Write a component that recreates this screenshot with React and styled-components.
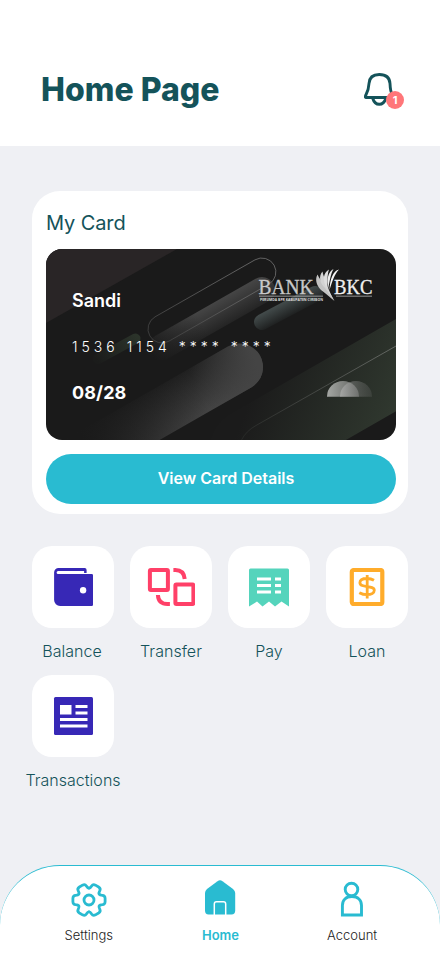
import React from "react";
import styled, { createGlobalStyle } from "styled-components";

const GlobalStyle = createGlobalStyle`
  * { box-sizing: border-box; }
  body { margin: 0; font-family: Inter, "Liberation Sans", sans-serif; background: #eff0f4; }
  svg { display: block; flex: none; }
`;

const Screen = styled.div`
  width: 440px;
  height: 956px;
  display: flex;
  flex-direction: column;
  overflow: hidden;
  background: #eff0f4;
`;

const Header = styled.header`
  height: 146px;
  padding: 34px 35px 0 41px;
  display: flex;
  align-items: center;
  justify-content: space-between;
  background: #fff;
`;

const Title = styled.h1`
  margin: 0;
  font-size: 32px;
  line-height: 40px;
  font-weight: 800;
  color: #14535a;
`;

const BellButton = styled.div`
  position: relative;
  width: 41px;
  height: 38px;
`;

const Badge = styled.span`
  position: absolute;
  left: 22px;
  top: 20px;
  width: 18px;
  height: 18px;
  border-radius: 50%;
  background: #ff7679;
  color: #fff;
  font-size: 11px;
  font-weight: 700;
  line-height: 18px;
  text-align: center;
`;

const Main = styled.main`
  flex: 1;
  padding: 45px 32px 0;
  display: flex;
  flex-direction: column;
  gap: 32px;
`;

const Panel = styled.section`
  height: 323px;
  padding: 19px 12px 10px 14px;
  border-radius: 28px;
  background: #fff;
`;

const PanelTitle = styled.h2`
  margin: 0 0 13px;
  font-size: 20px;
  line-height: 26px;
  font-weight: 400;
  letter-spacing: -0.1px;
  color: #14535a;
`;

const BankCard = styled.div`
  position: relative;
  isolation: isolate;
  width: 350px;
  height: 191px;
  padding: 40px 26px 0;
  display: flex;
  flex-direction: column;
  gap: 22px;
  border-radius: 16px;
  overflow: hidden;
  background: #1a1a1a;
  color: #fff;

  & > svg { position: absolute; inset: 0; z-index: -1; }
`;

const CardText = styled.div`
  height: 24px;
  line-height: 24px;
  white-space: pre;
  font-size: ${(p) => p.$size}px;
  font-weight: ${(p) => p.$weight};
  letter-spacing: ${(p) => p.$tracking || 0}px;
`;

const PrimaryButton = styled.button`
  width: 350px;
  height: 50px;
  margin-top: 14px;
  padding: 0 0 2px 10px;
  border: 0;
  border-radius: 25px;
  background: #29bbd1;
  color: #fff;
  font: 600 16px/48px Inter, sans-serif;
  text-align: center;
`;

const Grid = styled.div`
  display: grid;
  grid-template-columns: repeat(4, 82px);
  justify-content: space-between;
  row-gap: 14px;
`;

const Shortcut = styled.div`
  height: 115px;
  display: flex;
  flex-direction: column;
  align-items: center;
`;

const Tile = styled.div`
  width: 82px;
  height: 82px;
  flex: none;
  display: grid;
  place-items: center;
  border-radius: 20px;
  background: #fff;
`;

const Label = styled.span`
  margin-top: 12px;
  padding-right: ${(p) => p.$nudge || 0}px;
  font-size: 16px;
  line-height: 22px;
  font-weight: 300;
  letter-spacing: 0.03px;
  white-space: nowrap;
  color: #14535a;
`;

const NavBar = styled.nav`
  height: 91px;
  padding: 11px 22px 0 23px;
  display: grid;
  grid-template-columns: repeat(3, 1fr);
  border-top: 1px solid #29bbd1;
  border-radius: 60px 60px 0 0;
  background: #fff;
`;

const NavItem = styled.div`
  display: flex;
  flex-direction: column;
  align-items: center;
  gap: 5px;
  font-size: 13px;
  line-height: 20px;
  font-weight: ${(p) => (p.$active ? 600 : 300)};
  color: ${(p) => (p.$active ? "#29bbd1" : "#222")};
`;

const CardArt = () => (
  <svg width="350" height="191" viewBox="46 249 350 191">
    <defs>
      <linearGradient id="upper" gradientUnits="userSpaceOnUse" x1="215" y1="302" x2="230" y2="329">
        <stop offset="0" stopColor="#454545" />
        <stop offset="1" stopColor="#1e1e1e" />
      </linearGradient>
      <linearGradient id="fadeGray" gradientUnits="userSpaceOnUse" x1="148" y1="350" x2="200" y2="320">
        <stop offset="0" stopColor="#1a1a1a" />
        <stop offset="1" stopColor="#1a1a1a" stopOpacity="0" />
      </linearGradient>
      <linearGradient id="teal" gradientUnits="userSpaceOnUse" x1="285" y1="302" x2="293" y2="317">
        <stop offset="0" stopColor="#414949" />
        <stop offset="1" stopColor="#1a1b1b" />
      </linearGradient>
      <linearGradient id="leaf" gradientUnits="userSpaceOnUse" x1="136" y1="336" x2="98" y2="362">
        <stop offset="0" stopColor="#2b332a" />
        <stop offset="1" stopColor="#1b1c1b" />
      </linearGradient>
      <linearGradient id="lower" gradientUnits="userSpaceOnUse" x1="166" y1="376" x2="203" y2="440">
        <stop offset="0" stopColor="#1c1c1c" />
        <stop offset="0.75" stopColor="#464646" />
      </linearGradient>
      <linearGradient id="lowerFade" gradientUnits="userSpaceOnUse" x1="80" y1="435" x2="190" y2="375">
        <stop offset="0" stopColor="#1a1a1a" />
        <stop offset="1" stopColor="#1a1a1a" stopOpacity="0" />
      </linearGradient>
      <linearGradient id="lowerCap" gradientUnits="userSpaceOnUse" x1="195" y1="385" x2="255" y2="360">
        <stop offset="0" stopColor="#444" stopOpacity="0" />
        <stop offset="1" stopColor="#444" />
      </linearGradient>
      <linearGradient id="green" gradientUnits="userSpaceOnUse" x1="385" y1="425" x2="260" y2="375">
        <stop offset="0" stopColor="#2f372e" />
        <stop offset="1" stopColor="#1b1b1b" />
      </linearGradient>
      <linearGradient id="outline" gradientUnits="userSpaceOnUse" x1="276" y1="260" x2="150" y2="340">
        <stop offset="0" stopColor="#747474" />
        <stop offset="1" stopColor="#303030" />
      </linearGradient>
      <linearGradient id="ray" gradientUnits="userSpaceOnUse" x1="396" y1="347" x2="242" y2="440">
        <stop offset="0" stopColor="#7d807c" />
        <stop offset="1" stopColor="#2b2d2b" />
      </linearGradient>
      <linearGradient id="halfA" x1="0" y1="0" x2="1" y2="0">
        <stop offset="0" stopColor="#a5a7a4" />
        <stop offset="1" stopColor="#5b5e5a" />
      </linearGradient>
      <linearGradient id="halfB" x1="0" y1="0" x2="1" y2="0">
        <stop offset="0" stopColor="#c8c8c8" stopOpacity="0.45" />
        <stop offset="1" stopColor="#777" stopOpacity="0.22" />
      </linearGradient>
    </defs>
    <path d="M46 249H177L46 323Z" fill="#292526" />
    <path d="M239.500 367 60 470" stroke="url(#lower)" strokeWidth="47" strokeLinecap="round" />
    <path d="M239.500 367 60 470" stroke="url(#lowerFade)" strokeWidth="48" strokeLinecap="round" />
    <path d="M239.500 367 60 470" stroke="url(#lowerCap)" strokeWidth="47" strokeLinecap="round" />
    <path d="M250 449 450 334" stroke="url(#green)" strokeWidth="80" strokeLinecap="round" />
    <path d="M396 346 256 425.500Q246 431 241.500 440" fill="none" stroke="url(#ray)" strokeWidth="0.7" />
    <path d="M262 290 162 347" stroke="url(#upper)" strokeWidth="26" strokeLinecap="round" />
    <path d="M262 290 162 347" stroke="url(#fadeGray)" strokeWidth="27" strokeLinecap="round" />
    <path d="M262 322 315 294" stroke="url(#teal)" strokeWidth="16" strokeLinecap="round" />
    <path d="M98 359 135.500 338.500" stroke="url(#leaf)" strokeWidth="10" strokeLinecap="round" />
    <rect x="-14" y="-14" width="143" height="28" rx="14" transform="translate(162 329) rotate(-29.700)" fill="none" stroke="url(#outline)" strokeWidth="0.7" />

    <g fontFamily="Liberation Serif, serif" strokeWidth="0.300">
      <text x="258.500" y="293.500" fontSize="20.500" textLength="55" lengthAdjust="spacingAndGlyphs" fill="#c8c8c8" stroke="#c8c8c8">BANK</text>
      <text x="334" y="293.500" fontSize="20.500" textLength="38.500" lengthAdjust="spacingAndGlyphs" fill="#efefef" stroke="#efefef">BKC</text>
    </g>
    <path d="M259 295.700H323V296.600H259ZM336 295.700H372V296.600H336Z" fill="#bcbcbc" />
    <text x="260" y="300.500" fontSize="3.800" fontWeight="700" textLength="63" lengthAdjust="spacingAndGlyphs" fontFamily="Open Sans, sans-serif" fill="#ddd">PERUMDA BPR KABUPATEN CIREBON</text>
    <path d="M317.500 274.500C315 279 316 285 321 290C326 294 330 297 334.500 301C332 296 328 290 325 286C322 282 319 278 317.500 274.500Z" fill="#c3c3c3" />
    <path d="M322.500 271.500C318.500 276 319.500 283 325 288L333 299C330 292 328 288 326 282C324.500 278 323 275 322.500 271.500Z" fill="#d3d3d3" />
    <path d="M329 269.500C323 273 322.500 280 326.500 288C328 280 327 275 329 269.500Z" fill="#dedede" />
    <path d="M333.500 269C328 272 326.500 279 328 289C330 280 330.500 274 333.500 269Z" fill="#eee" />
    <path d="M339 269.500C333 271 330 279 329.500 290C332.500 281 334 275 339 269.500Z" fill="#f4f4f4" />
    <path d="M327 396.700a16 15.700 0 0 1 32 0Z" fill="url(#halfA)" />
    <path d="M340 396.700a16 15.700 0 0 1 32 0Z" fill="url(#halfB)" />
  </svg>
);

const BellIcon = () => (
  <svg width="41" height="38" viewBox="364 71 41 38" fill="none" stroke="#14535a" strokeWidth="2.900" strokeLinecap="round" strokeLinejoin="round">
    <path d="M366 97.500H391.500C393 97.500 393.300 95.800 392.300 94.500C390.400 92 390.200 88 390 83.500C389.600 77.500 385.500 74.500 379.300 74.500S369.400 77.500 369 83.500C368.700 88 368 91 366.200 94.300C365.300 96 365 97.500 366 97.500Z" />
    <path d="M372.800 98.500C374 102.500 376.400 104.300 379.300 104.300S384.500 102.500 385.800 98.500" />
  </svg>
);

const WalletIcon = () => (
  <svg width="40" height="38" viewBox="-.6 0 40 38">
    <path d="M5 0H31a2 2 0 0 1 2 2V5H30.500V3H4.500a1.500 1.500 0 0 0 0 3H38a1.500 1.500 0 0 1 1.500 1.500V36.500A1.500 1.500 0 0 1 38 38H6.500A6 6 0 0 1 .5 32V4.500A4.500 4.500 0 0 1 5 0Z" fill="#3728b6" />
    <circle cx="29.500" cy="22.300" r="3.200" fill="#fff" />
  </svg>
);

const TransferIcon = () => (
  <svg width="48" height="38" viewBox="-.4 0 48 38" fill="none" stroke="#ff4068" strokeWidth="4" strokeLinejoin="round">
    <rect x="2.500" y="2" width="18" height="20" rx="1" />
    <rect x="28" y="16.500" width="18" height="19.500" rx="1" />
    <path d="M26 2H28Q36.500 2 37.300 11M10.500 27Q11 36 20 36H22.500" />
  </svg>
);

const ReceiptIcon = () => (
  <svg width="40" height="39" viewBox="0 0 40 39">
    <path d="M1.500 .5H38.500A1.500 1.500 0 0 1 40 2V38.500L32.500 33.500 26 38.500 20 33.500 13.500 38.500 8 33.500 0 38.500V2A1.500 1.500 0 0 1 1.500 .5Z" fill="#55d4bc" />
    <path d="M8 9.500H22V12.500H8ZM26 9.500H32V12.500H26ZM8 16H22V19H8ZM26 16H32V19H26ZM8 22.500H22V25.500H8ZM26 22.500H32V25.500H26Z" fill="#fff" />
  </svg>
);

const LoanIcon = () => (
  <svg width="36" height="38" viewBox="0 0 36 38" fill="none" stroke="#ffac2b">
    <rect x="2.800" y="2" width="30.500" height="34" rx="2" strokeWidth="4.200" />
    <path d="M25 12.300Q22 10.500 18 10.500C13.700 10.500 10.900 12.200 10.900 14.700C10.900 20.400 25.300 16.800 25.300 22.300C25.300 25 22.300 26.700 18 26.700Q14 26.700 10.300 24.700M18.200 7V30.500" strokeWidth="2.800" />
  </svg>
);

const NewsIcon = () => (
  <svg width="40" height="38" viewBox="-.5 0 40 38">
    <rect x=".5" width="39" height="38" rx="1.500" fill="#3728b6" />
    <path d="M6.500 8H18V17.500H6.500ZM22 8H34V11H22ZM22 14.500H34V17.500H22ZM6.500 21H34V24H6.500ZM6.500 27.500H34V30.500H6.500Z" fill="#fff" />
  </svg>
);

const toothAngles = [0, 60, 120, 180, 240, 300];

const GearIcon = () => (
  <svg width="36" height="43" viewBox="-18 -23 36 43" fill="none" stroke="#29bbd1" strokeWidth="2.800" strokeLinejoin="round" strokeLinecap="round">
    {toothAngles.map((angle) => (
      <path key={angle} transform={`rotate(${angle})`} d="M10.200 -5.890C10.700 -5 11.800 -4.700 13.400 -4.700Q16 -4.600 16.100 -1.800V1.800Q16 4.600 13.400 4.700C11.800 4.700 10.700 5 10.200 5.890" />
    ))}
    <circle r="5" />
  </svg>
);

const HomeIcon = () => (
  <svg width="32" height="43" viewBox="204.500 877 32 43">
    <path d="M218 881.200Q220.500 879.500 223 881.200L233.500 889Q235.700 890.800 235.700 893V910.500Q235.700 914.500 232 914.500H209Q205.500 914.500 205.500 910.500V893Q205.500 890.800 207.500 889Z" fill="#29bbd1" />
    <path d="M214.800 915V904Q214.800 901.800 217 901.800H224Q226.200 901.800 226.200 904V915" fill="none" stroke="#fff" strokeWidth="1.500" />
  </svg>
);

const AccountIcon = () => (
  <svg width="24" height="43" viewBox="340 877 24 43" fill="none" stroke="#29bbd1" strokeWidth="2.900">
    <circle cx="351.500" cy="889.500" r="6.300" />
    <path d="M342.400 915V905.500C342.400 900 346 896.500 351.900 896.500S361.500 900 361.500 905.500V915Z" />
  </svg>
);

const shortcuts = [
  ["Balance", WalletIcon, 2],
  ["Transfer", TransferIcon, 0],
  ["Pay", ReceiptIcon, 0],
  ["Loan", LoanIcon, 0],
  ["Transactions", NewsIcon, 0],
];

const navItems = [
  ["Settings", GearIcon, false],
  ["Home", HomeIcon, true],
  ["Account", AccountIcon, false],
];

export default function App() {
  return (
    <Screen>
      <GlobalStyle />
      <Header>
        <Title>Home Page</Title>
        <BellButton>
          <BellIcon />
          <Badge>1</Badge>
        </BellButton>
      </Header>
      <Main>
        <Panel>
          <PanelTitle>My Card</PanelTitle>
          <BankCard>
            <CardArt />
            <CardText $size={18} $weight={600}>Sandi</CardText>
            <CardText $size={14} $weight={350} $tracking={4}>1536 1154 **** ****</CardText>
            <CardText $size={18} $weight={700} $tracking={0.1}>08/28</CardText>
          </BankCard>
          <PrimaryButton>View Card Details</PrimaryButton>
        </Panel>
        <Grid>
          {shortcuts.map(([name, Icon, nudge]) => (
            <Shortcut key={name}>
              <Tile><Icon /></Tile>
              <Label $nudge={nudge}>{name}</Label>
            </Shortcut>
          ))}
        </Grid>
      </Main>
      <NavBar>
        {navItems.map(([name, Icon, active]) => (
          <NavItem key={name} $active={active}>
            <Icon />
            {name}
          </NavItem>
        ))}
      </NavBar>
    </Screen>
  );
}
